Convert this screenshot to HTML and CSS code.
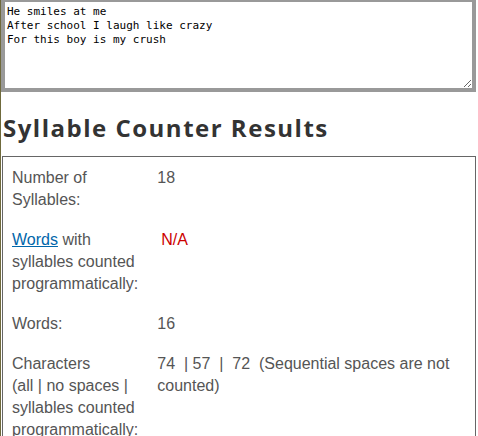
FILE: index.html
```html
<!DOCTYPE html>
<html lang="en">
<head>
    <meta charset="UTF-8">
    <meta name="viewport" content="width=device-width, initial-scale=1.0">
    <title>Syllable Counter</title>
    <link rel="stylesheet" href="styles.css">
</head>
<body>

<div class="page">
    <!-- Texto de entrada -->
    <textarea class="poem-input" rows="5">He smiles at me
After school I laugh like crazy
For this boy is my crush</textarea>

    <h2 class="results-title">Syllable Counter Results</h2>

    <!-- Tabela de resultados -->
    <div class="results-box">
        <table class="results">
            <tr>
                <td class="label">Number of Syllables:</td>
                <td class="value">18</td>
            </tr>
            <tr>
                <td class="label"><a href="#">Words</a> with syllables counted programmatically:</td>
                <td class="value"><span class="na">N/A</span></td>
            </tr>
            <tr>
                <td class="label">Words:</td>
                <td class="value">16</td>
            </tr>
            <tr>
                <td class="label">Characters<br>(all | no spaces | syllables counted programmatically:</td>
                <td class="value">74 &nbsp;| 57 &nbsp;| &nbsp;72 &nbsp;(Sequential spaces are not counted)</td>
            </tr>
        </table>
    </div>
</div>

</body>
</html>
```

FILE: styles.css
```css
html, body {
    margin: 0;
    background-color: #fff;
}
body {
    font-family: "Liberation Sans", Arial, sans-serif;
    height: 436px;
    overflow: hidden;
}
.page {
    border-left: 1px solid #6f6a3c;
    padding: 0 3px 0 0;
    min-height: 100%;
}
.poem-input {
    display: block;
    box-sizing: border-box;
    width: 475px;
    height: 94px;
    margin: -2px 0 0 0;
    padding: 3px 2px;
    border: 4px solid #999;
    font-family: "DejaVu Sans Mono", monospace;
    font-size: 11px;
    line-height: 14px;
    color: #000;
    resize: vertical;
}
.results-title {
    margin: 20px 0 12px 2px;
    font-family: "Open Sans", sans-serif;
    font-size: 24px;
    font-weight: bold;
    letter-spacing: 1.5px;
    line-height: 32px;
    color: #333;
}
.results-box {
    border: 1px solid #666;
    margin-left: 1px;
    width: 472px;
    padding-top: 1px;
}
.results {
    border-collapse: collapse;
    font-size: 16px;
    line-height: 22px;
    color: #555;
}
.results td {
    vertical-align: top;
    padding: 9px 9px;
}
.results td.label {
    width: 126px;
}
.results td.value {
    padding-left: 10px;
    padding-right: 14px;
}
.results a {
    color: #0066aa;
}
.na {
    color: #c00;
    margin-left: 4px;
}
```
